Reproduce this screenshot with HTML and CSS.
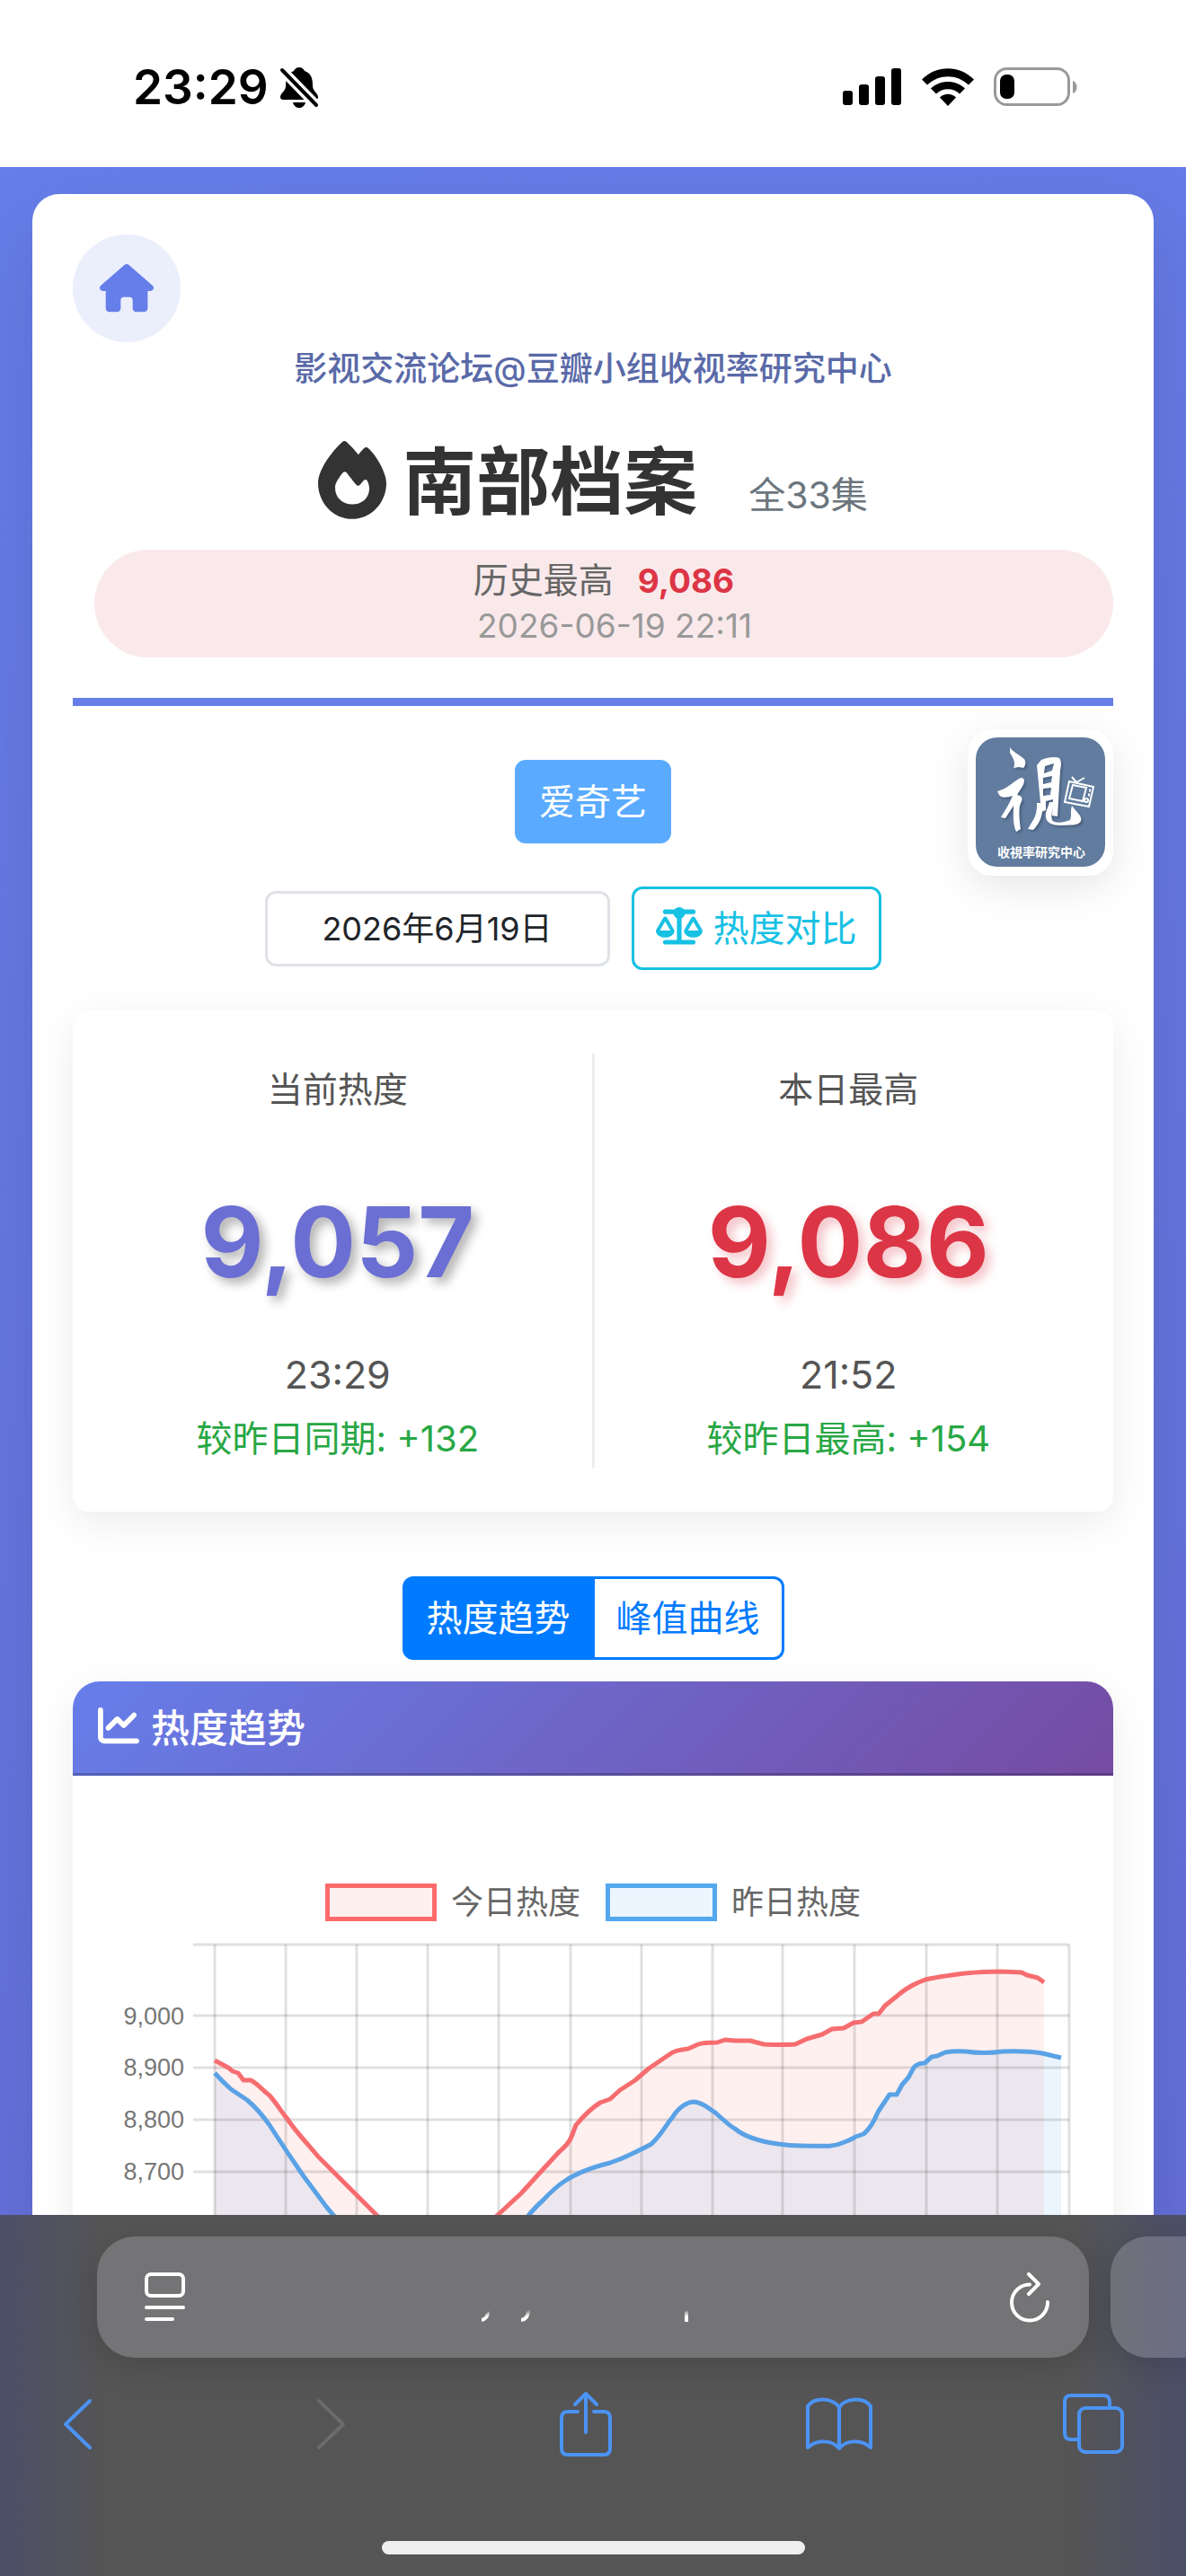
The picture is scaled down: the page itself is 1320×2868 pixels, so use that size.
FILE: index.html
```html
<!DOCTYPE html>
<html lang="zh-CN">
<head>
  <meta charset="UTF-8">
  <meta name="viewport" content="width=device-width, initial-scale=1.0">
  <title>南部档案 - 热度趋势</title>
  <link rel="stylesheet" href="styles.css">
</head>
<body>
  <div class="status-bar">
    <div class="status-left">
      <span class="clock">23:29</span>
      <svg class="bell" viewBox="0 0 44 46" aria-hidden="true">
        <path d="M22 1c-3 0-5 2-6 4C8 8 7 15 7 22c0 5-6 8-6 12 0 2 1 3 3 3h36c2 0 3-1 3-3 0-4-6-7-6-12 0-8-1-14-9-17-1-2-3-4-6-4zM15 40h14c-1 4-4 6-7 6s-6-2-7-6z"/>
        <path d="M3 4l38 39" stroke="#fff" stroke-width="11"/>
        <path d="M3 4l38 39" stroke="#000" stroke-width="4" stroke-linecap="round"/>
      </svg>
    </div>
    <div class="status-right">
      <svg class="signal" viewBox="0 0 66 42" aria-hidden="true">
        <rect x="0" y="25" width="11" height="16" rx="3"/>
        <rect x="18" y="18" width="11" height="23" rx="3"/>
        <rect x="36" y="9" width="11" height="32" rx="3"/>
        <rect x="54" y="0" width="11" height="41" rx="3"/>
      </svg>
      <svg class="wifi" viewBox="0 0 58 42" aria-hidden="true">
        <path d="M0 12.500C16-4 42-4 58 12.500L52 18.500C39 6 19 6 6 18.500z"/>
        <path d="M10 22.500C20 12.500 38 12.500 48 22.500L42 28.500C35 21.500 23 21.500 16 28.500z"/>
        <path d="M20 32.500c5-5 13-5 18 0L29 42z"/>
      </svg>
      <svg class="battery" viewBox="0 0 94 44" aria-hidden="true">
        <rect x="1.500" y="1.500" width="82" height="40" rx="13" fill="none" stroke="#999" stroke-width="3"/>
        <rect x="7" y="8" width="16" height="27" rx="7"/>
        <path d="M88 15c6 2 6 12 0 14z" fill="#999"/>
      </svg>
    </div>
  </div>

  <main class="page">
    <div class="container">
      <header class="header">
        <a class="home-btn" href="#" aria-label="首页">
          <svg viewBox="0 0 576 512"><path d="M575.8 255.500c0 18-15 32.100-32 32.100h-32l.7 160.200c0 2.700-.2 5.400-.5 8.100V472c0 22.100-17.900 40-40 40H456c-1.100 0-2.200 0-3.300-.1c-1.400 .1-2.800 .1-4.200 .1H392c-22.100 0-40-17.900-40-40V384c0-17.700-14.300-32-32-32H256c-17.700 0-32 14.300-32 32v88c0 22.100-17.900 40-40 40H128.100c-1.500 0-3-.1-4.500-.2c-1.200 .1-2.400 .2-3.600 .2H104c-22.100 0-40-17.900-40-40V360c0-.9 0-1.900 .1-2.800V287.600H32c-18 0-32-14-32-32.100c0-9 3-17 10-24L266.400 8c7-7 15-8 22-8s15 2 21 7L564.800 231.500c8 7 12 15 11 24z"/></svg>
        </a>
        <p class="forum">影视交流论坛@豆瓣小组收视率研究中心</p>
        <div class="title-row">
          <svg class="flame" viewBox="0 0 448 512" aria-hidden="true"><path d="M159.300 5.400c7.800-7.300 19.900-7.200 27.700 .1c27.600 25.900 53.500 53.800 77.700 84c11-14.400 23.500-30.100 37-42.900c7.900-7.400 20.100-7.400 28 .1c34.600 33 63.900 76.600 84.500 118c20.300 40.800 33.800 82.500 33.800 111.900C448 404.200 348.200 512 224 512C98.400 512 0 404.100 0 276.500c0-38.400 17.800-85.300 45.400-131.700C73.300 97.700 112.700 48.600 159.300 5.400zM225.700 416c25.300 0 47.700-7 68.800-21c42.100-29.400 53.400-88.200 28.100-134.400c-4.500-9-16-9.600-22.500-2l-25.200 29.300c-6.600 7.600-18.500 7.400-24.700-.5c-16.500-21-46-58.500-62.800-79.800c-6.300-8-18.300-8.100-24.700-.1c-33.800 42.500-50.800 69.300-50.800 99.400C112 375.400 162.600 416 225.700 416z"/></svg>
          <h1>南部档案</h1>
          <span class="episodes">全33集</span>
        </div>
        <div class="record">
          <div class="record-top">历史最高<strong>9,086</strong></div>
          <div class="record-date">2026-06-19 22:11</div>
        </div>
      </header>

      <section class="controls">
        <svg class="logo" viewBox="0 0 162 163" role="img" aria-label="收視率研究中心">
          <rect x="9" y="9" width="144" height="144" rx="24" fill="#617c9e"/>
          <g class="logo-ink" fill="#fff">
            <path d="M47 20c2 4 10 8 16 13 2 3 2 7-1 10l-5-1-6 1c3-6-1-12-4-17z"/>
            <path d="M33 69c8-2 14-7 21-12 5-4 8-4 9 0 0 5-5 11-8 16 6 1 7 5 4 9-3 7-1 22 0 29l-5 3c-4-8-3-20-3-29l-9 14-5-1c4-7 9-14 13-24-6 2-12 3-15-1z"/>
            <path d="M77 40l5-6c7-3 15-4 20-2 3 4 2 9 1 14l-3 51-6-1 1-18-8 2 0 10-5 2zM86 41l10-3-2 8-9 3zM84 54l10-2-1 7-9 2zM84 66l9-1-1 8-8 1z" fill-rule="evenodd"/>
            <path d="M82 82c3 12-1 21-9 30l-6-1 7-12c3-6 3-11 3-17zM91 81l6 0c-2 8-5 14-3 20 3 4 12 3 20 0 2-6 0-10 2-16 5 7 12 12 10 17-3 6-13 4-22 5-10 0-17-3-17-10-1-6 3-10 4-16z"/>
          </g>
          <g fill="none" stroke="#fff" stroke-width="2">
            <path d="M113 58l27 6-5 22-27-5zM117 62l15 3-4 15-15-3zM116 53l5 6M130 54l-9 5"/>
            <path d="M135 68h2M134 73h2" stroke-width="3"/>
            <circle cx="132" cy="79" r="2"/>
          </g>
          <text x="82" y="142" text-anchor="middle" class="logo-text">收視率研究中心</text>
        </svg>
        <button type="button" class="btn btn-platform">爱奇艺</button>
        <div class="date-row">
          <input type="text" class="date-input" value="2026年6月19日" aria-label="日期">
          <button type="button" class="btn btn-compare">
            <svg viewBox="0 0 640 512" aria-hidden="true"><path d="M384 32H512c17.700 0 32 14.300 32 32s-14.300 32-32 32H398.400c-5.200 25.800-22.900 47.100-46.400 57.300V448H512c17.700 0 32 14.300 32 32s-14.300 32-32 32H128c-17.700 0-32-14.300-32-32s14.300-32 32-32H288V153.300c-23.500-10.300-41.200-31.600-46.400-57.300H128c-17.700 0-32-14.300-32-32s14.300-32 32-32H256c14.600-19.400 37.800-32 64-32s49.400 12.600 64 32zm55.600 288H584.400L512 195.800 439.600 320zM512 416c-62.900 0-115.200-34-126-78.900c-2.600-11 1-22.300 6.700-32.100l95.200-163.200c5-8.600 14.200-13.800 24.100-13.800s19.100 5.300 24.100 13.800l95.200 163.200c5.700 9.800 9.300 21.100 6.700 32.100C627.200 382 574.900 416 512 416zM126.800 195.800L54.400 320H199.300L126.800 195.800zM.9 337.100c-2.600-11 1-22.300 6.700-32.100l95.200-163.200c5-8.600 14.200-13.800 24.100-13.800s19.100 5.300 24.100 13.800l95.200 163.200c5.700 9.800 9.300 21.100 6.700 32.100C242 382 189.700 416 126.800 416S11.700 382 .9 337.100z"/></svg>
            热度对比
          </button>
        </div>
      </section>

      <section class="stats">
        <div class="stat">
          <div class="stat-label">当前热度</div>
          <div class="stat-value">9,057</div>
          <div class="stat-time">23:29</div>
          <div class="stat-diff">较昨日同期: +132</div>
        </div>
        <div class="stat">
          <div class="stat-label">本日最高</div>
          <div class="stat-value stat-max">9,086</div>
          <div class="stat-time">21:52</div>
          <div class="stat-diff">较昨日最高: +154</div>
        </div>
      </section>

      <div class="toggle">
        <button type="button" class="btn active">热度趋势</button>
        <button type="button" class="btn">峰值曲线</button>
      </div>

      <section class="chart-card">
        <h2 class="chart-header">
          <svg viewBox="0 0 512 512" aria-hidden="true"><path d="M64 64c0-17.700-14.300-32-32-32S0 46.300 0 64V400c0 44.200 35.800 80 80 80H480c17.700 0 32-14.300 32-32s-14.300-32-32-32H80c-8.800 0-16-7.200-16-16V64zm406.600 86.600c12.500-12.500 12.500-32.800 0-45.300s-32.800-12.500-45.300 0L320 210.700l-57.400-57.400c-12.500-12.500-32.800-12.500-45.300 0l-112 112c-12.500 12.500-12.500 32.800 0 45.300s32.800 12.500 45.300 0L240 221.300l57.400 57.400c12.500 12.500 32.800 12.500 45.300 0l128-128z"/></svg>
          热度趋势
        </h2>
        <div class="legend">
          <span class="legend-item"><i class="swatch today"></i>今日热度</span>
          <span class="legend-item"><i class="swatch yesterday"></i>昨日热度</span>
        </div>
        <svg class="chart" viewBox="0 0 1158 400" role="img" aria-label="今日与昨日热度曲线">
          <!-- yesterday -->
          <path class="area-yesterday" d="M158 158L176 176 194 188 208 203 219 216 238 245 257 273 283 308 305 335 320 400H480L500 325 523 300 548 278 574 265 598 258 620 249 644 237 654 226 667 208 678 196 691 190 702 193 715 202 737 220 759 232 785 237 811 239 837 239 856 236 871 229 880 226 889 216 897 200 909 182 917 182 923 171 930 163 936 152 943 148 948 147 956 140 962 139 971 135 984 134 1014 135 1049 134 1079 136 1100 141V400H158z"/>
          <path class="area-today" d="M158 144L173 152 184 158 190 166 198 166 219 183 238 208 262 238 287 265 305 283 338 316 360 340 380 400H440L455 332 473 316 499 292 519 270 541 246 554 232 560 216 587 191 598 187 609 177 626 166 641 153 673 133 696 126 726 121 754 122 789 126 804 126 834 115 845 109 858 108 869 102 891 92 897 92 904 83 934 61 949 54 969 50 993 47 1032 45 1056 46 1074 52 1081 57V400H158z"/>
          <g class="grid">
            <path d="M134 15H1109M134 94H1109M134 152H1109M134 210H1109M134 268H1109M134 326H1109"/>
            <path d="M237 15V400M316 15V400M395 15V400M474 15V400M554 15V400M633 15V400M712 15V400M790 15V400M870 15V400M950 15V400M1029 15V400M1109 15V400"/>
            <path class="axis" d="M158 15V400"/>
          </g>
          <g class="ticks">
            <text x="124" y="104">9,000</text>
            <text x="124" y="161">8,900</text>
            <text x="124" y="219">8,800</text>
            <text x="124" y="277">8,700</text>
          </g>
          <path class="line line-yesterday" d="M158 158Q167 168 176 176L194 188Q207 199 219 216L238 245 257 273 283 308Q295 322 310 340M490 340Q508 313 523 300 537 285 548 278 566 266 598 258 610 254 620 249 637 241 644 237C656 226 662 213 667 208 676 193 687 190 691 190 703 191 709 199 715 202 726 212 733 218 737 220 750 231 771 235 785 237Q798 239 811 239C832 239 845 241 856 236Q867 232 871 229L880 226C892 216 896 200 897 200L909 182H917L923 171 930 163 936 152Q940 147 948 147L956 140 962 139 971 135Q981 133 994 134 1014 137 1035 134 1061 133 1079 136L1100 141"/>
          <path class="line line-today" d="M158 144L173 152 178 156 184 158 190 166 198 166C206 170 211 177 219 183 227 192 232 201 238 208 246 220 254 229 262 238Q273 252 287 265L305 283 338 316 360 337M448 338Q460 328 473 316L499 292 519 270 541 246Q552 237 555 229L560 216Q574 199 587 191L598 187 609 177Q620 170 626 166 634 159 641 153L663 138Q670 132 685 131L696 126Q702 124 717 124L726 121 737 122H754L769 126Q790 127 804 126L817 120 834 115 845 109 858 108 869 102 878 101 891 92H897L904 83 919 71Q930 61 949 54 961 51 993 47 1014 45 1032 45L1056 46 1062 49 1074 52 1081 57"/>
        </svg>
      </section>
    </div>
  </main>

  <footer class="browser-bar">
    <div class="tab-strip">
      <div class="url-bar">
        <button type="button" class="icon-btn" aria-label="阅读器">
          <svg width="46" height="56" viewBox="0 0 46 56"><rect x="2" y="2" width="41" height="24" rx="5"/><path d="M2 39H43M2 52H31"/></svg>
        </button>
        <svg class="url-trace" width="234" height="18" viewBox="0 0 234 18" aria-hidden="true">
          <defs>
            <linearGradient id="fade" x1="0" y1="0" x2="0" y2="1">
              <stop offset="0" stop-color="#fff" stop-opacity="0"/>
              <stop offset="0.6" stop-color="#fff"/>
            </linearGradient>
          </defs>
          <path fill="url(#fade)" d="M9 4q0 10-9 12v-4q4-1 5-5zM54 2q0 13-10 14v-4q5-1 6-7zM226 5l4-2v13h-4z"/>
        </svg>
        <button type="button" class="icon-btn" aria-label="刷新">
          <svg width="46" height="56" viewBox="0 0 46 56"><path d="M22 13.500A20 20 0 1 0 42 33M21 2L32 13 21 24"/></svg>
        </button>
      </div>
      <div class="next-tab"></div>
    </div>
    <nav class="toolbar">
      <button type="button" class="icon-btn" aria-label="后退"><svg width="34" height="60" viewBox="0 0 34 60"><path d="M31 4L4 30 31 56"/></svg></button>
      <button type="button" class="icon-btn" aria-label="前进" disabled><svg width="34" height="60" viewBox="0 0 34 60"><path d="M3 4L30 30 3 56"/></svg></button>
      <button type="button" class="icon-btn" aria-label="分享"><svg width="58" height="74" viewBox="0 0 58 74"><path d="M20 23H9Q2 23 2 30V64Q2 71 9 71H49Q56 71 56 64V30Q56 23 49 23H38M29 46V3M17 15L29 3 41 15"/></svg></button>
      <button type="button" class="icon-btn" aria-label="书签"><svg width="74" height="62" viewBox="0 0 74 62"><path d="M37 12C30 2 10 0 2 11V57C12 48 29 48 37 58 45 48 62 48 72 57V11C64 0 44 2 37 12zM37 12V58"/></svg></button>
      <button type="button" class="icon-btn" aria-label="标签页"><svg width="68" height="68" viewBox="0 0 68 68"><rect x="18" y="16" width="48" height="49" rx="7"/><path d="M18 51H9Q2 51 2 44V9Q2 2 9 2H45Q52 2 52 9V16"/></svg></button>
    </nav>
    <div class="home-indicator"></div>
  </footer>
</body>
</html>
```
FILE: styles.css
```css
* {
  box-sizing: border-box;
}

body {
  display: flex;
  flex-direction: column;
  height: 100vh;
  margin: 0;
  overflow: hidden;
  font-family: Inter, "Noto Sans CJK SC", sans-serif;
  color: #333;
  background: #fff;
}

h1, h2, p {
  margin: 0;
}

button, input {
  font-family: inherit;
}

/* status bar */
.status-bar {
  display: flex;
  justify-content: space-between;
  align-items: center;
  flex-shrink: 0;
  height: 186px;
  padding: 8px 120px 0 148px;
}

.status-left, .status-right {
  display: flex;
  align-items: center;
}

.status-left {
  gap: 12px;
}

.status-right {
  gap: 22px;
}

.clock {
  font-size: 53px;
  font-weight: 600;
  color: #000;
}

.bell {
  width: 44px;
  height: 46px;
}

.signal {
  width: 66px;
  height: 42px;
}

.wifi {
  width: 58px;
  height: 42px;
}

.battery {
  width: 94px;
  height: 44px;
}

/* page */
.page {
  flex: 1;
  min-height: 0;
  overflow: hidden;
  padding: 30px 36px;
  background: linear-gradient(160deg, #667eea, #656fd8);
}

.container {
  padding: 45px;
  background: #fff;
  border-radius: 30px;
  box-shadow: 0 30px 90px rgba(0, 0, 0, 0.12);
}

.header {
  padding-bottom: 45px;
  border-bottom: 9px solid #667eea;
}

.home-btn {
  display: flex;
  align-items: center;
  justify-content: center;
  width: 120px;
  height: 120px;
  border-radius: 50%;
  background: #ebeffc;
}

.home-btn svg {
  width: 60px;
  fill: #667eea;
}

.forum {
  line-height: 60px;
  text-align: center;
  font-size: 37px;
  font-weight: 500;
  color: #5a6aa8;
}

.title-row {
  display: flex;
  justify-content: center;
  align-items: baseline;
  height: 171px;
  padding-top: 36px;
}

.flame {
  align-self: flex-start;
  width: 76px;
  margin: 14px 18px 0 0;
  fill: #333;
}

h1 {
  margin-right: 57px;
  font-size: 82px;
  line-height: 120px;
  font-weight: 700;
}

.episodes {
  font-size: 41px;
  color: #6c757d;
}

.record {
  height: 120px;
  margin-left: 24px;
  padding: 9px 0;
  border-radius: 60px;
  background: #fae9eb;
  text-align: center;
  line-height: 50px;
}

.record-top {
  font-size: 39px;
  color: #666;
}

.record-top strong {
  margin-left: 27px;
  font-size: 37px;
  color: #dc3545;
}

.record-date {
  padding-left: 24px;
  font-size: 37px;
  color: #999;
}

/* platform + date */
.btn {
  height: 93px;
  padding: 0 24px 5px;
  border: 3px solid transparent;
  border-radius: 12px;
  font-size: 40px;
  cursor: pointer;
}

.controls {
  position: relative;
  display: flex;
  flex-direction: column;
  align-items: center;
  gap: 48px;
  padding: 60px 0 45px;
}

.btn-platform {
  background: #5aabff;
  color: #fff;
}

.date-row {
  display: flex;
  align-items: center;
  gap: 24px;
  margin-right: 45px;
}

.date-input {
  width: 384px;
  height: 84px;
  padding: 0 0 5px;
  border: 3px solid #dee2e6;
  border-radius: 12px;
  background: #fff;
  text-align: center;
  font-size: 36px;
  color: #212529;
}

.btn-compare {
  display: flex;
  align-items: center;
  gap: 12px;
  background: #fff;
  border-color: #17c1e4;
  color: #17c1e4;
}

.btn-compare svg {
  width: 52px;
  fill: currentColor;
}

.logo {
  position: absolute;
  top: 26px;
  right: 0;
  width: 162px;
  border-radius: 27px;
  background: #fff;
  box-shadow: 0 12px 45px rgba(0, 0, 0, 0.1);
}

.logo-ink {
  filter: drop-shadow(2px 2px 1px #4a6180);
}

.logo-text {
  font-size: 14px;
  font-weight: 700;
  fill: #fff;
}

/* stats */
.stats {
  display: flex;
  padding: 48px 12px;
  border-radius: 18px;
  box-shadow: 0 12px 45px rgba(0, 0, 0, 0.08);
}

.stat {
  flex: 1;
  padding-top: 12px;
  text-align: center;
  color: #555;
}

.stat + .stat {
  border-left: 3px solid #eee;
}

.stat-label {
  line-height: 56px;
  font-size: 39px;
}

.stat-value {
  margin: 76px 0 48px;
  line-height: 132px;
  font-size: 108px;
  font-weight: 700;
  color: #6b6fd3;
  text-shadow: 6px 6px 12px rgba(0, 0, 0, 0.3);
}

.stat-max {
  color: #dc3545;
  text-shadow: 6px 6px 12px rgba(220, 53, 69, 0.3);
}

.stat-time {
  line-height: 66px;
  font-size: 43px;
}

.stat-diff {
  padding: 9px 0 3px;
  line-height: 60px;
  font-size: 40px;
  color: #28a745;
}

/* toggle */
.toggle {
  display: flex;
  justify-content: center;
  margin: 72px 0 24px;
}

.toggle .btn {
  border-color: #007bff;
  background: #fff;
  color: #007bff;
}

.toggle .btn:first-child {
  border-radius: 12px 0 0 12px;
}

.toggle .btn:last-child {
  border-left: 0;
  border-radius: 0 12px 12px 0;
}

.toggle .active {
  background: #007bff;
  color: #fff;
}

/* chart */
.chart-card {
  border-radius: 30px;
  overflow: hidden;
  box-shadow: 0 12px 45px rgba(0, 0, 0, 0.08);
}

.chart-header {
  display: flex;
  align-items: center;
  gap: 13px;
  height: 105px;
  padding: 0 28px 5px;
  border-bottom: 3px solid rgba(0, 0, 0, 0.2);
  background: linear-gradient(135deg, #667eea, #764ba2);
  background-origin: border-box;
  color: #fff;
  font-size: 43px;
  font-weight: 500;
}

.chart-header svg {
  width: 46px;
  fill: #fff;
}

.legend {
  display: flex;
  justify-content: center;
  gap: 28px;
  padding-top: 114px;
  line-height: 54px;
  font-size: 36px;
  color: #666;
}

.legend-item {
  display: flex;
  align-items: center;
  gap: 16px;
}

.swatch {
  width: 124px;
  height: 42px;
  border: 5px solid #ff6b6b;
  background: #fff0f0;
}

.swatch.yesterday {
  border-color: #54a8ee;
  background: #edf5fe;
}

.chart {
  display: block;
  width: 100%;
  margin-top: 5px;
}

.area-yesterday {
  fill: rgba(84, 170, 240, 0.12);
}

.area-today {
  fill: rgba(255, 107, 107, 0.1);
}

.grid {
  fill: none;
  stroke: rgba(0, 0, 0, 0.12);
  stroke-width: 3;
}

.ticks {
  font-family: "Liberation Sans", Arial, sans-serif;
  font-size: 27px;
  text-anchor: end;
  fill: #777;
}

.line {
  fill: none;
  stroke-width: 5;
  stroke-linejoin: round;
}

.line-today {
  stroke: #f66d6f;
}

.line-yesterday {
  stroke: #5aa2e6;
}

/* browser bottom bar */
.browser-bar {
  flex-shrink: 0;
  height: 402px;
  padding-top: 24px;
  background: linear-gradient(90deg, #4c4f68, #555 9%, #555 90%, #4c4f68);
}

.tab-strip {
  display: flex;
  gap: 24px;
  padding-left: 108px;
}

.url-bar {
  display: flex;
  flex: 1;
  justify-content: space-between;
  align-items: center;
  height: 135px;
  padding: 0 42px 0 53px;
  border-radius: 42px;
  background: #747375;
  box-shadow: 0 9px 36px rgba(0, 0, 0, 0.15);
}

.next-tab {
  width: 84px;
  border-radius: 42px 0 0 42px;
  background: linear-gradient(90deg, #717179, #6b6d84);
  box-shadow: 0 9px 36px rgba(0, 0, 0, 0.15);
}

.icon-btn {
  display: flex;
  justify-content: center;
  padding: 0;
  border: 0;
  background: none;
}

.icon-btn svg {
  fill: none;
  stroke: #4b93f4;
  stroke-width: 4;
  stroke-linecap: round;
  stroke-linejoin: round;
}

.icon-btn:disabled svg {
  stroke: #6b6b6b;
}

.url-bar .icon-btn svg {
  stroke: #fff;
}

.url-trace {
  align-self: flex-end;
  margin: 0 26px 38px 0;
}

.toolbar {
  display: flex;
  justify-content: space-between;
  align-items: center;
  height: 147px;
  padding: 0 66px 0 49px;
}

.toolbar .icon-btn {
  width: 74px;
}

.home-indicator {
  width: 471px;
  height: 15px;
  margin: 57px auto 0;
  border-radius: 8px;
  background: #eee;
}
```
